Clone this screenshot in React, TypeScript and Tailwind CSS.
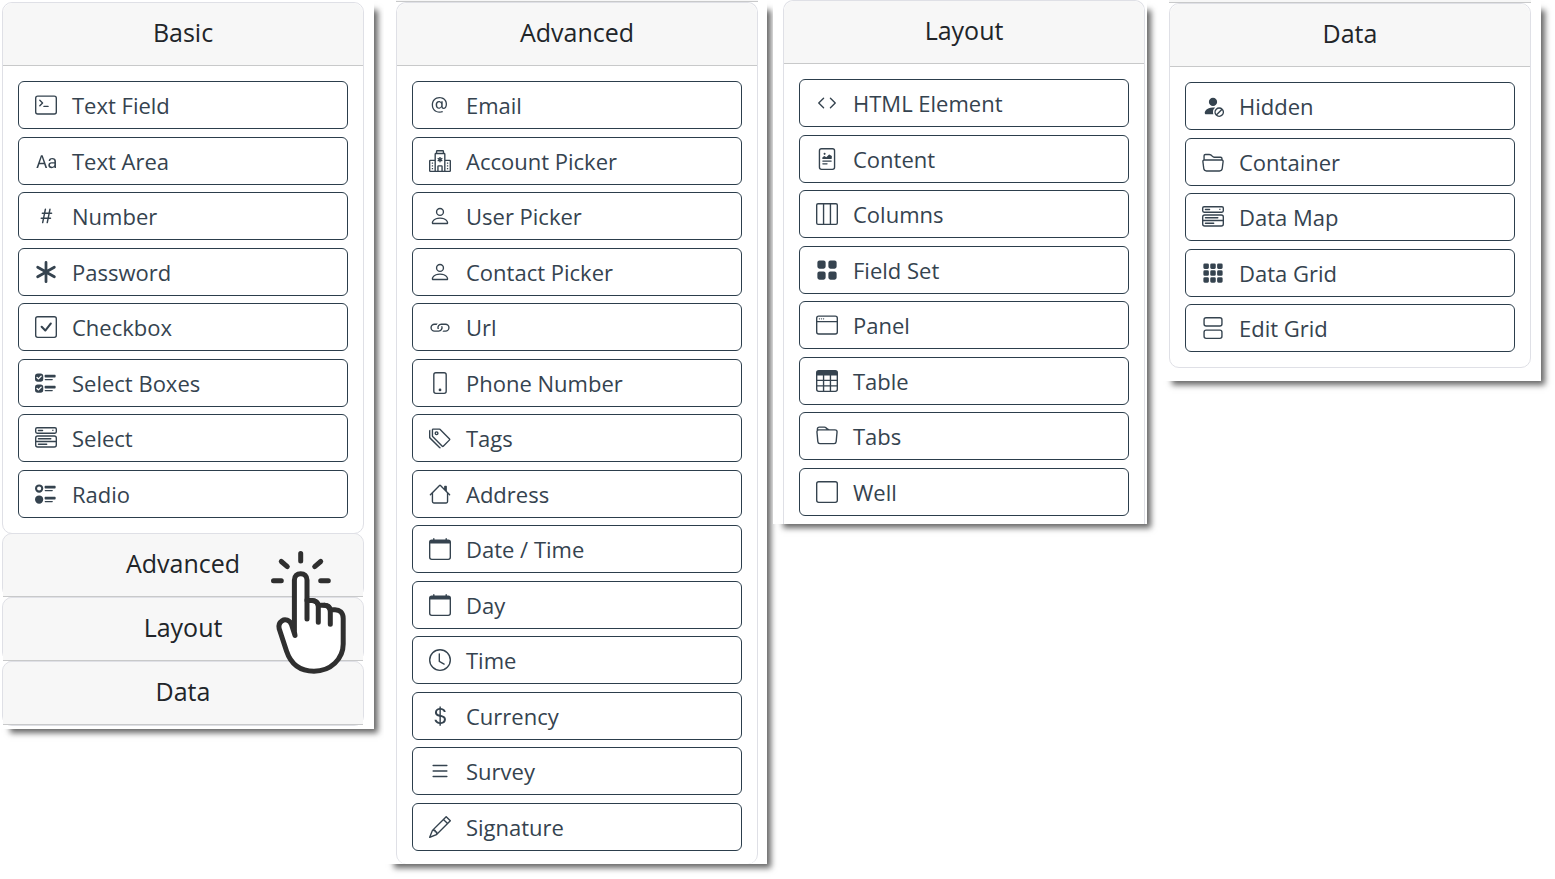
import React from 'react';
import { clsx } from 'clsx';
import type { IconType } from 'react-icons';
import {
  BsAsterisk,
  BsAt,
  BsCalendar,
  BsCheckSquare,
  BsClock,
  BsCode,
  BsCurrencyDollar,
  BsFileRichtext,
  BsFolder,
  BsFolder2Open,
  BsGrid3X3GapFill,
  BsGridFill,
  BsHash,
  BsHospital,
  BsHouse,
  BsLayoutThreeColumns,
  BsLink,
  BsList,
  BsMenuButtonWide,
  BsPencil,
  BsPerson,
  BsPersonFillSlash,
  BsPhone,
  BsSquare,
  BsTable,
  BsTags,
  BsTerminal,
  BsType,
  BsUiChecks,
  BsUiRadios,
  BsViewStacked,
  BsWindow,
} from 'react-icons/bs';

type Field = {
  label: string;
  icon: IconType;
};

const basicFields: Field[] = [
  { label: 'Text Field', icon: BsTerminal },
  { label: 'Text Area', icon: BsType },
  { label: 'Number', icon: BsHash },
  { label: 'Password', icon: BsAsterisk },
  { label: 'Checkbox', icon: BsCheckSquare },
  { label: 'Select Boxes', icon: BsUiChecks },
  { label: 'Select', icon: BsMenuButtonWide },
  { label: 'Radio', icon: BsUiRadios },
];

const advancedFields: Field[] = [
  { label: 'Email', icon: BsAt },
  { label: 'Account Picker', icon: BsHospital },
  { label: 'User Picker', icon: BsPerson },
  { label: 'Contact Picker', icon: BsPerson },
  { label: 'Url', icon: BsLink },
  { label: 'Phone Number', icon: BsPhone },
  { label: 'Tags', icon: BsTags },
  { label: 'Address', icon: BsHouse },
  { label: 'Date / Time', icon: BsCalendar },
  { label: 'Day', icon: BsCalendar },
  { label: 'Time', icon: BsClock },
  { label: 'Currency', icon: BsCurrencyDollar },
  { label: 'Survey', icon: BsList },
  { label: 'Signature', icon: BsPencil },
];

const layoutFields: Field[] = [
  { label: 'HTML Element', icon: BsCode },
  { label: 'Content', icon: BsFileRichtext },
  { label: 'Columns', icon: BsLayoutThreeColumns },
  { label: 'Field Set', icon: BsGridFill },
  { label: 'Panel', icon: BsWindow },
  { label: 'Table', icon: BsTable },
  { label: 'Tabs', icon: BsFolder },
  { label: 'Well', icon: BsSquare },
];

const dataFields: Field[] = [
  { label: 'Hidden', icon: BsPersonFillSlash },
  { label: 'Container', icon: BsFolder2Open },
  { label: 'Data Map', icon: BsMenuButtonWide },
  { label: 'Data Grid', icon: BsGrid3X3GapFill },
  { label: 'Edit Grid', icon: BsViewStacked },
];

type PanelProps = {
  className?: string;
  children: React.ReactNode;
};

const Panel = ({ className, children }: PanelProps) => (
  <section
    className={clsx(
      'flex-1 bg-white shadow-[7px_7px_6px_-3px_rgba(0,0,0,0.6)]',
      className
    )}
  >
    {children}
  </section>
);

type GroupHeaderProps = {
  title: string;
  open?: boolean;
};

const GroupHeader = ({ title, open = false }: GroupHeaderProps) => (
  <h2>
    <button
      type="button"
      aria-expanded={open}
      className="block h-[63px] w-full rounded-t-[10px] border-b border-[#c8c9ca] bg-[#f7f7f7] pb-1 text-center text-[25px] leading-8 text-[#212529]"
    >
      {title}
    </button>
  </h2>
);

type FieldGroupProps = {
  title: string;
  fields: Field[];
  className?: string;
  bodyClassName?: string;
};

const FieldGroup = ({
  title,
  fields,
  className = 'rounded-[10px] border',
  bodyClassName = 'pb-[15px]',
}: FieldGroupProps) => (
  <div className={clsx('border-[#dfe0e6] bg-white', className)}>
    <GroupHeader title={title} open />
    <ul className={clsx('px-[15px] pt-[15px]', bodyClassName)}>
      {fields.map(({ label, icon: Icon }) => (
        <li
          key={label}
          className="not-last:odd:mb-2 not-last:even:mb-[7px]"
        >
          <button
            type="button"
            className="flex h-12 w-full items-center gap-[15px] rounded-md border border-[#2c3e4c] pl-4 text-[22px] text-[#35434f]"
          >
            <Icon size={22} className="shrink-0" aria-hidden="true" />
            <span>{label}</span>
          </button>
        </li>
      ))}
    </ul>
  </div>
);

type CollapsedGroupProps = {
  title: string;
  children?: React.ReactNode;
};

const CollapsedGroup = ({ title, children }: CollapsedGroupProps) => (
  <div className="relative -mt-px rounded-[10px] border border-[#dfe0e6] bg-[#f7f7f7]">
    <GroupHeader title={title} />
    {children}
  </div>
);

const ClickPointer = () => (
  <svg
    viewBox="0 0 76 124"
    width="76"
    height="124"
    fill="none"
    stroke="#2f2f2f"
    strokeWidth="5"
    strokeLinecap="round"
    strokeLinejoin="round"
    className="pointer-events-none absolute top-4 right-4 z-10"
    aria-hidden="true"
  >
    <path d="M29.7 3.5V11M10.3 11.5 16.3 16.7M49.7 11.5 43.7 16.7M2.5 30.7H10.3M49.7 30.7H57.3" />
    <path
      fill="#fff"
      d="M24 85.5 20.5 74.5C18.8 70 14 68.8 11 70.8 8 72.8 7.5 76 8.2 78.8L15.5 101C20 114.5 29 121.2 43 121.2 59.5 121.2 72.2 109 72.2 94V68.5C72.2 62.5 68.5 59.7 64 59.7H59.3C58.5 56.5 56.5 55.2 53.5 55.2H47.3C46.5 52 44 50.5 41 50.5H36V30C36 26 33.3 23.7 29.7 23.7 26 23.7 23.4 26 23.4 30V82Z"
    />
    <path d="M36 50V69M41 50.5C45 50.5 47.3 53 47.3 57V72.3M53.5 55.2C57 55.2 59.3 58 59.3 62V74.3" />
  </svg>
);

const App = () => {
  return (
    <main
      className="flex items-start bg-white pr-[14px] pb-4"
      style={{ fontFamily: '"Open Sans", "Noto Sans", sans-serif' }}
    >
      {/* Full accordion, Basic open */}
      <Panel className="pt-[2px] pr-[10px] pb-[3px] pl-[2px]">
        <FieldGroup title="Basic" fields={basicFields} />
        <CollapsedGroup title="Advanced">
          <ClickPointer />
        </CollapsedGroup>
        <CollapsedGroup title="Layout" />
        <CollapsedGroup title="Data" />
      </Panel>

      {/* Advanced */}
      <Panel className="ml-[10px] pr-[9px] pl-3">
        <div className="h-[2px] border-b border-[#c8c9ca] bg-[#f7f7f7]" />
        <FieldGroup
          title="Advanced"
          fields={advancedFields}
          className="rounded-[10px] border border-b-0"
          bodyClassName="pb-[13px]"
        />
      </Panel>

      {/* Layout */}
      <Panel className="ml-[6px] pr-[2px] pl-[10px]">
        <FieldGroup
          title="Layout"
          fields={layoutFields}
          className="rounded-t-[10px] border border-b-0"
          bodyClassName="pb-2"
        />
      </Panel>

      {/* Data */}
      <Panel className="ml-[15px] pr-[10px] pb-[13px] pl-[7px]">
        <div className="h-[3px] border-b border-[#c8c9ca] bg-[#f7f7f7]" />
        <FieldGroup title="Data" fields={dataFields} />
      </Panel>
    </main>
  );
};

export default App;
